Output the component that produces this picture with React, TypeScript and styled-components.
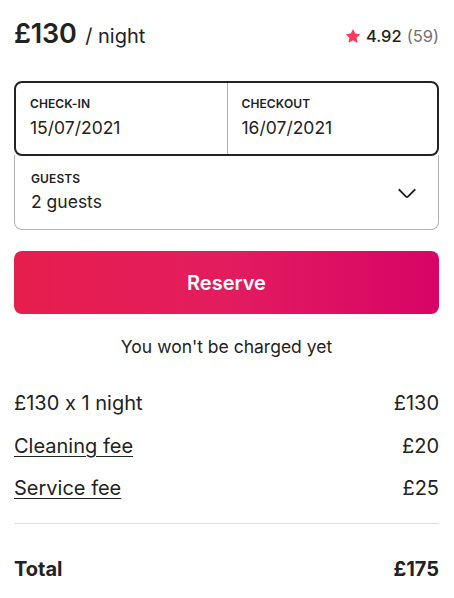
import { createGlobalStyle, styled } from 'styled-components';

const GlobalStyle = createGlobalStyle`
  * {
    box-sizing: border-box;
  }

  body {
    margin: 0;
    background-color: #ffffff;
    font-family: Inter, 'Noto Sans', sans-serif;
    font-feature-settings: 'calt' 0;
    color: #222222;
  }
`;

const StyledCard = styled.div`
  display: flex;
  flex-direction: column;
  padding: 11px 15px 0 14px;
`;

const StyledHeader = styled.div`
  display: flex;
  justify-content: space-between;
  align-items: baseline;
  height: 51px;
  padding-top: 6px;
`;

const StyledPrice = styled.span`
  font-size: 27px;
  font-weight: 600;
  letter-spacing: -0.2px;

  span {
    font-size: 20px;
    font-weight: 400;
    margin-left: 2px;
    letter-spacing: 0;
  }
`;

const StyledRating = styled.span`
  display: flex;
  align-items: center;
  gap: 6px;
  font-size: 16.5px;
  font-weight: 500;

  svg {
    width: 14px;
    height: 14px;
  }

  span {
    font-weight: 400;
    color: #717171;
    margin-left: -1px;
  }
`;

const StyledPicker = styled.div`
  margin-top: 19px;
  display: flex;
  flex-direction: column;
`;

const StyledDates = styled.div`
  display: grid;
  grid-template-columns: 1fr 1fr;
  height: 75px;
  border: 2px solid #222222;
  border-radius: 8px;
`;

const StyledField = styled.div<{ $divider?: boolean }>`
  display: flex;
  flex-direction: column;
  justify-content: center;
  gap: 6px;
  padding: 0 14px 4px;
  border-left: ${({ $divider }) => ($divider ? '1px solid #b0b0b0' : 'none')};
`;

const StyledLabel = styled.div`
  font-size: 12px;
  font-weight: 600;
  text-transform: uppercase;
  letter-spacing: 0.1px;
`;

const StyledValue = styled.div`
  font-size: 17.5px;
  font-weight: 400;
`;

const StyledGuests = styled.div`
  display: flex;
  justify-content: space-between;
  align-items: center;
  height: 75px;
  margin-top: -1px;
  padding: 0 20px 0 16px;
  border: 1px solid #b0b0b0;
  border-top: none;
  border-radius: 0 0 8px 8px;

  svg {
    width: 22px;
    height: 22px;
  }
`;

const StyledGuestText = styled.div`
  display: flex;
  flex-direction: column;
  gap: 5px;
  margin-top: -2px;
`;

const StyledReserve = styled.button`
  margin-top: 21px;
  height: 63px;
  width: 100%;
  border: none;
  border-radius: 8px;
  background: linear-gradient(to right, #e61e4d 0%, #e31c5f 50%, #d70466 100%);
  color: #ffffff;
  font-family: inherit;
  font-size: 20px;
  font-weight: 600;
  cursor: pointer;
`;

const StyledNote = styled.p`
  margin: 22px 0 0;
  text-align: center;
  font-size: 17.5px;
  color: #222222;
`;

const StyledLines = styled.div`
  display: flex;
  flex-direction: column;
  gap: 19.5px;
  margin-top: 35px;
  padding-bottom: 23px;
  border-bottom: 1px solid #dddddd;
`;

const StyledRow = styled.div<{ $bold?: boolean }>`
  display: flex;
  justify-content: space-between;
  align-items: center;
  font-size: 20px;
  line-height: 23px;
  font-weight: ${({ $bold }) => ($bold ? 700 : 400)};
`;

const StyledLink = styled.span`
  text-decoration: underline;
  text-underline-offset: 3px;
  text-decoration-thickness: 1px;
`;

const StyledTotal = styled.div`
  padding-top: 34px;
`;

export default function App() {
  return (
    <>
      <GlobalStyle />
      <StyledCard>
        <StyledHeader>
          <StyledPrice>
            £130 <span>/ night</span>
          </StyledPrice>
          <StyledRating>
            <svg viewBox='0 0 32 32' fill='#FF385C'>
              <path d='M15.1 1.58l-4.13 8.88-9.86 1.27a1 1 0 0 0-.54 1.74l7.3 6.57-1.97 9.85a1 1 0 0 0 1.48 1.06l8.62-5 8.63 5a1 1 0 0 0 1.48-1.06l-1.97-9.85 7.3-6.57a1 1 0 0 0-.55-1.73l-9.86-1.28-4.12-8.88a1 1 0 0 0-1.82 0z' />
            </svg>
            4.92 <span>(59)</span>
          </StyledRating>
        </StyledHeader>

        <StyledPicker>
          <StyledDates>
            <StyledField>
              <StyledLabel>Check-in</StyledLabel>
              <StyledValue>15/07/2021</StyledValue>
            </StyledField>
            <StyledField $divider>
              <StyledLabel>Checkout</StyledLabel>
              <StyledValue>16/07/2021</StyledValue>
            </StyledField>
          </StyledDates>
          <StyledGuests>
            <StyledGuestText>
              <StyledLabel>Guests</StyledLabel>
              <StyledValue>2 guests</StyledValue>
            </StyledGuestText>
            <svg viewBox='0 0 32 32' fill='none' stroke='#222222' strokeWidth='2.6'>
              <path d='M28 12L17.4 22.6a2 2 0 0 1-2.8 0L4 12' />
            </svg>
          </StyledGuests>
        </StyledPicker>

        <StyledReserve>Reserve</StyledReserve>
        <StyledNote>You won't be charged yet</StyledNote>

        <StyledLines>
          <StyledRow>
            <span>£130 x 1 night</span>
            <span>£130</span>
          </StyledRow>
          <StyledRow>
            <StyledLink>Cleaning fee</StyledLink>
            <span>£20</span>
          </StyledRow>
          <StyledRow>
            <StyledLink>Service fee</StyledLink>
            <span>£25</span>
          </StyledRow>
        </StyledLines>

        <StyledTotal>
          <StyledRow $bold>
            <span>Total</span>
            <span>£175</span>
          </StyledRow>
        </StyledTotal>
      </StyledCard>
    </>
  );
}
